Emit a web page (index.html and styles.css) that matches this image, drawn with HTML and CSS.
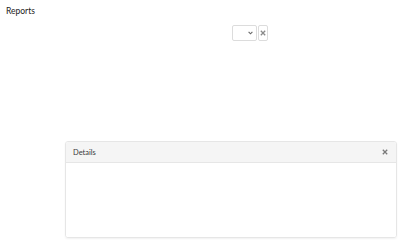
FILE: index.html
```html
<!DOCTYPE html>
<html lang="en">
<head>
  <meta charset="UTF-8" />
  <title>Reports</title>
  <link rel="stylesheet" href="styles.css">
</head>
<body>

<header class="page-title">Reports</header>

<div class="toolbar">
  <div class="picker">
    <div class="select-wrap">
      <select class="picker-select">
        <option></option>
      </select>
      <svg class="select-arrow" width="5" height="4" viewBox="0 0 5 4"><path d="M0.6 0.8L2.5 2.8L4.4 0.8" fill="none" stroke="#666" stroke-width="1.1"/></svg>
    </div>
    <button class="picker-clear" title="Clear">
      <svg width="6" height="6" viewBox="0 0 6 6"><path d="M0.8 0.8L5.2 5.2M5.2 0.8L0.8 5.2" stroke="#8a8a8a" stroke-width="1.3"/></svg>
    </button>
  </div>
</div>

<!-- Details panel -->
<section class="panel">
  <div class="panel-head">
    <span class="panel-title">Details</span>
    <button class="panel-close" title="Close">
      <svg width="6" height="6" viewBox="0 0 6 6"><path d="M0.8 0.8L5.2 5.2M5.2 0.8L0.8 5.2" stroke="#7a7a7a" stroke-width="1.3"/></svg>
    </button>
  </div>
  <div class="panel-body"></div>
</section>

</body>
</html>
```

FILE: styles.css
```css
body {
  font-family: Lato, 'Noto Sans', sans-serif;
  margin: 0;
  background: #fff;
  color: #222;
  width: 400px;
  height: 245px;
  overflow: hidden;
}

.page-title {
  font-size: 8.5px;
  padding: 6px 0 0 6px;
  line-height: 11px;
}

.toolbar {
  display: flex;
  padding-left: 232px;
  margin-top: 8px;
}

.picker {
  display: flex;
  gap: 1px;
}

.select-wrap {
  position: relative;
  width: 25px;
  height: 16px;
}

.picker-select {
  display: block;
  appearance: none;
  -webkit-appearance: none;
  width: 25px;
  height: 16px;
  border: 1px solid #dcdcdc;
  border-radius: 2px;
  background: #fff;
  font-size: 7px;
  padding: 0;
  margin: 0;
  box-sizing: border-box;
}

.select-arrow {
  position: absolute;
  right: 4px;
  top: 6px;
  pointer-events: none;
}

.picker-clear {
  width: 10px;
  height: 16px;
  padding: 0;
  margin: 0;
  border: 1px solid #dcdcdc;
  border-radius: 2px;
  background: #fff;
  display: flex;
  align-items: center;
  justify-content: center;
  box-sizing: border-box;
}

.panel {
  margin: 100px 3px 0 65px;
  height: 97px;
  border: 1px solid #e6e6e6;
  border-radius: 3px;
  box-shadow: 0 1px 2px rgba(0,0,0,0.06);
  box-sizing: border-box;
  display: flex;
  flex-direction: column;
  overflow: hidden;
}

.panel-head {
  height: 21px;
  background: #f5f5f5;
  border-bottom: 1px solid #e6e6e6;
  display: flex;
  align-items: center;
  justify-content: space-between;
  padding: 0 8px 0 7px;
  box-sizing: border-box;
}

.panel-title {
  font-size: 7.5px;
  color: #3a3a3a;
}

.panel-close {
  border: none;
  background: none;
  padding: 0;
  display: flex;
}

.panel-body {
  flex: 1;
  background: #fff;
}
```
